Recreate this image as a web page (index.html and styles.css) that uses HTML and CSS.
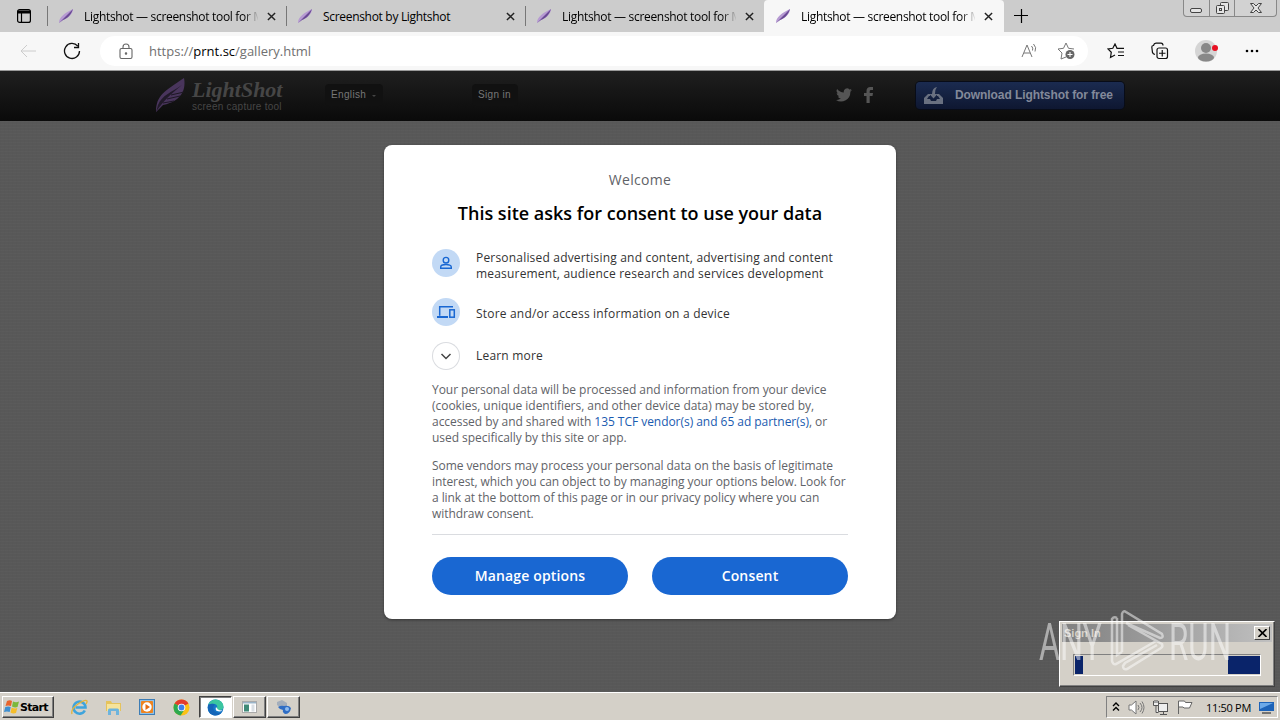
FILE: index.html
```html
<!DOCTYPE html>
<html lang="en">
<head>
    <meta charset="UTF-8">
    <title>Lightshot — screenshot tool for Mac &amp; Win</title>
    <link rel="stylesheet" href="styles.css">
</head>
<body>
    <!-- Shared shapes -->
    <svg class="defs" width="0" height="0">
        <symbol id="feather" viewBox="0 0 16 16">
            <path d="M1 15C1 9 7 5 15 1c0 4-4 9-10 11z" fill="#b69ad2"/>
            <path d="M1 15C5 11 9 7 15 1c-2 6-5 9-10 11z" fill="#6a4a94"/>
        </symbol>
        <symbol id="close" viewBox="0 0 10 10">
            <path d="M1 1l8 8M9 1l-8 8" stroke="#222" stroke-width="1.6"/>
        </symbol>
    </svg>

    <!-- Tabs -->
    <div class="tabs">
        <div class="tab-menu">
            <svg width="16" height="16" viewBox="0 0 16 16" fill="none" stroke="#000" stroke-width="1.2"><rect x="1.6" y="1.6" width="12.8" height="12.8" rx="2"/><path d="M2 3.4h12M2 4.4h12" stroke-width="2"/><path d="M5.5 5v9"/></svg>
        </div>
        <div class="tab">
            <svg class="favicon"><use href="#feather"/></svg>
            <span class="tab-title fade">Lightshot — screenshot tool for Mac</span>
            <svg class="tab-close"><use href="#close"/></svg>
        </div>
        <div class="tab">
            <svg class="favicon"><use href="#feather"/></svg>
            <span class="tab-title">Screenshot by Lightshot</span>
            <svg class="tab-close"><use href="#close"/></svg>
        </div>
        <div class="tab">
            <svg class="favicon"><use href="#feather"/></svg>
            <span class="tab-title fade">Lightshot — screenshot tool for Mac</span>
            <svg class="tab-close"><use href="#close"/></svg>
        </div>
        <div class="tab active">
            <svg class="favicon"><use href="#feather"/></svg>
            <span class="tab-title fade">Lightshot — screenshot tool for Mac</span>
            <svg class="tab-close"><use href="#close"/></svg>
        </div>
        <svg class="new-tab" width="16" height="16" viewBox="0 0 16 16"><path d="M8.500 1v14M1 7.500h14" stroke="#000" stroke-width="1.2"/></svg>
        <div class="window-buttons">
            <svg width="25" height="16" fill="#e4e4e4" stroke="#444"><rect x="6.500" y="8.500" width="11" height="4" rx="1.5"/></svg>
            <svg width="25" height="16" fill="#e4e4e4" stroke="#444"><rect x="10.5" y="2.5" width="8" height="8" rx="1"/><rect x="6.5" y="5.5" width="8" height="8" rx="1"/><rect x="9.500" y="8.500" width="2" height="2"/></svg>
            <svg width="42" height="16" fill="#e4e4e4" stroke="#444"><path d="M15.500 3.500h3l2.500 2.500 2.500-2.500h3L23 8l3.500 4.500h-3L21 10l-2.500 2.500h-3L19 8z"/></svg>
        </div>
    </div>

    <!-- Address bar -->
    <div class="toolbar">
        <svg class="back" width="18" height="16" viewBox="0 0 18 16" fill="none" stroke="#ccc"><path d="M17 8H2M8 2L2 8l6 6"/></svg>
        <svg class="reload" width="18" height="18" viewBox="0 0 18 18" fill="none" stroke="#111" stroke-width="1.3"><path d="M14.800 4.200A7.500 7.500 0 1 0 16.500 9M15.500 1v4.500H11"/></svg>
        <div class="address">
            <svg class="lock" width="14" height="17" viewBox="0 0 14 17" fill="none" stroke="#666" stroke-width="1.1"><rect x="1" y="5.500" width="12" height="10" rx="1.500"/><path d="M4 5.500V4a3 3 0 0 1 6 0v1.500"/><circle cx="7" cy="10.500" r=".7" fill="#666"/></svg>
            <span class="url">https://<b>prnt.sc</b>/gallery.html</span>
            <svg class="read" width="18" height="16" viewBox="0 0 18 16" fill="none" stroke="#777"><path d="M1 14L6 2l5 12M3 10h6M10.500 3q2 2 1 4.500M12.500 1q3.500 3.500 1.500 7.500"/></svg>
            <svg class="fav-add" width="19" height="18" viewBox="0 0 19 18" fill="none" stroke="#777"><path d="M9 15l-5 2 1-6-4-4 5.500-.7L9 1l2.500 5.300L17 7"/><circle cx="13" cy="12.500" r="4.500" fill="#666" stroke="none"/><path d="M10.500 12.500h5M13 10v5" stroke="#fff"/></svg>
        </div>
        <svg class="favorites" width="18" height="16" viewBox="0 0 18 16" fill="none" stroke="#111" stroke-width="1.200"><path d="M8 12l-4.500 2.500.8-5.300L1 6l4.800-.7L8 1l2 4.300h7M11 9h6M11 12.500h6"/></svg>
        <svg class="collections" width="18" height="18" viewBox="0 0 18 18" fill="none" stroke="#111" stroke-width="1.200"><rect x="6" y="6" width="10.500" height="10.500" rx="2"/><path d="M11.250 8v6.500M8 11.250h6.500M4 12.500Q2 12 1.500 10.500L.8 5Q.8 3.500 2.500 3.500 3 1.200 5 1.200h5q2 0 2 2.300"/></svg>
        <svg class="profile" width="24" height="22" viewBox="0 0 24 22"><circle cx="11" cy="11" r="11" fill="#d5d5d5"/><circle cx="11" cy="8" r="5" fill="#888"/><ellipse cx="11" cy="17.500" rx="8" ry="4" fill="#888"/><circle cx="20" cy="8" r="3" fill="#e81123"/></svg>
        <svg class="more" width="14" height="4"><circle cx="2" cy="2" r="1.300"/><circle cx="7" cy="2" r="1.300"/><circle cx="12" cy="2" r="1.300"/></svg>
    </div>

    <!-- Web page -->
    <div class="page">
        <header class="site-header">
            <svg class="logo-feather" width="32" height="36" viewBox="0 0 32 36"><path d="M1 35C1 18 10 14 29 1c2 10-1 23-21 27z" fill="#49355c"/><path d="M1 35C8 24 16 17 27 8 17 15 7 18 3 28z" fill="#211a29"/><path d="M16 18l13-3M12 22l13-3M8 26l11-2" stroke="#1d1724" fill="none"/></svg>
            <div class="logo-text">
                <span class="logo-name">LightShot</span>
                <span class="logo-sub">screen capture tool</span>
            </div>
            <span class="chip language">English <i></i></span>
            <span class="chip sign-in">Sign in</span>
            <svg class="twitter" width="16" height="14" viewBox="0 0 24 20" fill="#555"><path d="M24 2.400a10 10 0 0 1-2.800.8A5 5 0 0 0 23.300.5a10 10 0 0 1-3.100 1.200 4.900 4.900 0 0 0-8.400 4.500A14 14 0 0 1 1.700 1a4.900 4.900 0 0 0 1.500 6.600 5 5 0 0 1-2.200-.6 4.900 4.900 0 0 0 3.900 4.900 5 5 0 0 1-2.200.1 4.900 4.900 0 0 0 4.600 3.400A10 10 0 0 1 0 17.500 14 14 0 0 0 21.500 5z"/></svg>
            <svg class="facebook" width="9" height="16" viewBox="0 0 9 16" fill="#555"><path d="M2.500 16V9H0V6h2.500V4C2.500 1.500 4 0 6.300 0H9v3H7Q5.700 3 5.700 4.200V6H9l-.5 3H5.700v7z"/></svg>
            <div class="download">
                <svg width="19" height="17" viewBox="0 0 19 17" fill="#697080"><path d="M0 11l4-4h2v2H5l-2 3h3l1 2h5l1-2h3l-2-3h-1V7h2l4 4v6H0z"/><path d="M8 7H5.500L9.500 11.500 13.500 7H11Q10.500 3 13 0 8 1 8 7z"/></svg>
                <span>Download Lightshot for free</span>
            </div>
        </header>

        <!-- Consent dialog -->
        <div class="consent">
            <p class="welcome">Welcome</p>
            <h1>This site asks for consent to use your data</h1>
            <div class="purpose first">
                <svg class="round" width="28" height="28" viewBox="0 0 28 28" fill="none" stroke="#1967d2" stroke-width="1.400"><circle cx="14" cy="11.200" r="2.800"/><path d="M8.700 19.300v-1.200c0-3.500 10.600-3.500 10.600 0v1.200z"/></svg>
                <p>Personalised advertising and content, advertising and content<br>measurement, audience research and services development</p>
            </div>
            <div class="purpose second">
                <svg class="round" width="28" height="28" viewBox="0 0 28 28" fill="none" stroke="#1967d2" stroke-width="1.500"><path d="M21 8.800H7.700v9"/><path d="M5 19h11" stroke-width="2"/><rect x="17.800" y="11.800" width="4.500" height="7.400"/></svg>
                <p>Store and/or access information on a device</p>
            </div>
            <div class="purpose third">
                <svg class="round outline" width="28" height="28" viewBox="0 0 28 28" fill="none" stroke="#444" stroke-width="1.500"><path d="M9.500 12l4.500 4.500 4.500-4.500"/></svg>
                <p>Learn more</p>
            </div>
            <p class="details">Your personal data will be processed and information from your device<br>(cookies, unique identifiers, and other device data) may be stored by,<br>accessed by and shared with <a>135 TCF vendor(s) and 65 ad partner(s)</a>, or<br>used specifically by this site or app.</p>
            <p class="details legitimate">Some vendors may process your personal data on the basis of legitimate<br>interest, which you can object to by managing your options below. Look for<br>a link at the bottom of this page or in our privacy policy where you can<br>withdraw consent.</p>
            <div class="actions">
                <button>Manage options</button>
                <button>Consent</button>
            </div>
        </div>
    </div>

    <!-- Taskbar -->
    <div class="taskbar">
        <div class="start">
            <svg width="16" height="16" viewBox="0 0 16 16"><path d="M3 2q3-1.500 5 0L7 7Q4 6 1.500 7z" fill="#e8642c"/><path d="M9 2.500q3 1.500 6 0L13.500 8Q11 9 8 7.500z" fill="#7cb83c"/><path d="M1.300 8q3-1 5.400 0l-1 5Q3 12 0 13z" fill="#3f8fd0"/><path d="M7.700 8.500q3 1.500 5.600.5L12 14q-3 1-5.500-.5z" fill="#f5bd2a"/></svg>
            <span>Start</span>
        </div>
        <svg class="launch ie" width="17" height="17" viewBox="0 0 17 17"><path d="M13.800 11.500A6 6 0 1 1 14.500 8.500H4.500" fill="none" stroke="#3fa4dc" stroke-width="2.600"/><path d="M1 15Q-.5 10 7 5t9-3q.500 1-1 3" fill="none" stroke="#e4b43c" stroke-width="1.300"/></svg>
        <svg class="launch" width="17" height="17" viewBox="0 0 17 17"><path d="M1 2h5l1 2h9v8H1z" fill="#e5c35c"/><path d="M2 5h13v7H2z" fill="#f6e39b"/><path d="M3 16v-5q0-1.500 1.500-1.500h8q1.500 0 1.500 1.500v5h-3v-4H6v4z" fill="#6db4dd"/></svg>
        <svg class="launch" width="17" height="17" viewBox="0 0 17 17"><rect x=".5" y=".5" width="15" height="15" fill="#8fc1e8" stroke="#3d7db5"/><rect x="2" y="2" width="12" height="12" rx="1" fill="#ee8420"/><circle cx="8" cy="8" r="4.700" fill="#fff"/><path d="M6.500 5l4.500 3-4.500 3z" fill="#e56c12"/></svg>
        <svg class="launch" width="17" height="17" viewBox="0 0 17 17"><circle cx="8.500" cy="8.500" r="8" fill="#fbc116"/><path d="M8.500 8.500L1.600 4.500a8 8 0 0 1 13.800 0z" fill="#e33b2e"/><path d="M8.500 8.500L1.600 4.500a8 8 0 0 0 6 12l4-6z" fill="#2da94f"/><path d="M2 4.500h13.500L8 6z" fill="#e33b2e"/><circle cx="8.500" cy="8.500" r="3.800" fill="#fff"/><circle cx="8.500" cy="8.500" r="2.900" fill="#3f7fe8"/></svg>
        <div class="task pressed">
            <svg width="17" height="17" viewBox="0 0 17 17"><circle cx="8.500" cy="8.500" r="8" fill="#1678c8"/><path d="M1 6Q4 0 9 .5q7 1 7.500 7 0 4-4.500 3.500-3 0-2-2 1-3-2-4-3-1-7 1z" fill="#3bc6a0"/><path d="M1 6q4-2 7-.5Q5 8 7 11.500q3 4 8 1.500-3 4-8 3.500Q0 15 1 6z" fill="#1565b8"/><path d="M9 8q-1 3 1 4 3 1 5.500-.500-3.500 0-4.500-1z" fill="#fff"/></svg>
        </div>
        <div class="task">
            <svg width="15" height="12" viewBox="0 0 15 12"><rect x=".5" y=".5" width="14" height="11" fill="#fff" stroke="#aaa"/><path d="M1 1h13v1.500H1z" fill="#9ab4c8"/><path d="M2 3.500h5v7H2z" fill="#3f8a78"/><path d="M9.500 3.500h3v7h-3z" fill="#d9dfe4"/></svg>
        </div>
        <div class="task">
            <svg width="17" height="16" viewBox="0 0 17 16"><path d="M2 3l5-2 5 3v4l-6 1-4-3z" fill="#a4aebb"/><path d="M3 8q3-2 6-1 5-1 7 2-1 6-6 6-3-2-2-4-3 0-5-3z" fill="#2f6dc4"/><circle cx="12" cy="10" r="2" fill="#8fbcf0"/></svg>
        </div>
        <div class="tray">
            <svg width="8" height="12" viewBox="0 0 8 12" fill="none" stroke="#000" stroke-width="1.400"><path d="M1 5l3-3 3 3M1 9.500l3-3 3 3"/></svg>
            <svg class="speaker" width="17" height="15" viewBox="0 0 17 15" fill="#fff" stroke="#777"><path d="M1 5h2.500L8 1v13l-4.500-4H1z"/><path d="M10 5q2 2.500 0 5M12 3q4 4.500 0 9M14 1.500q4 6 0 12" fill="none"/></svg>
            <svg class="network" width="16" height="15" viewBox="0 0 16 15" fill="#eee" stroke="#555"><rect x="5.500" y="3.500" width="9" height="8"/><path d="M7 14.500h7M10.500 12v2"/><path d="M.5 1v4.500h5V1M2 0v3M4 0v3M3 5.500v7h2.500" fill="#eee"/></svg>
            <svg class="flag" width="16" height="14" viewBox="0 0 16 14" fill="#fff" stroke="#666"><path d="M1.500 14V1h6l1 1.500H15L12.500 8H7L6 7H1.500"/></svg>
            <span class="clock">11:50 PM</span>
            <svg class="desktop" width="16" height="13" viewBox="0 0 16 13"><path d="M0 1h15v9H0z" fill="#1c63b8"/><path d="M1 2h13L1 8z" fill="#6ba9e8"/><path d="M3 12h9" stroke="#555" stroke-width="1.500"/></svg>
        </div>
    </div>

    <!-- Sign in window -->
    <div class="popup">
        <div class="popup-title">
            <span>Sign In</span>
            <div class="popup-close"><svg width="9" height="8" viewBox="0 0 9 8"><path d="M.5 0l8 8M8.500 0l-8 8" stroke="#000" stroke-width="1.600"/></svg></div>
        </div>
        <div class="progress"><i class="chunk small"></i><i class="chunk"></i></div>
    </div>

    <!-- Watermark -->
    <svg class="watermark" width="200" height="70" viewBox="1035 606 200 70">
        <text x="1039" y="660" textLength="63" lengthAdjust="spacingAndGlyphs">ANY</text>
        <text x="1169" y="660" textLength="62" lengthAdjust="spacingAndGlyphs">RUN</text>
        <path d="M1122 652V614q1-4 4-2l36 22q2 4-2 4l-34-15M1128 625l34 19q1 3-1 4l-34 21q-4 1-4-3l2-3 32-18M1117 618q-3-2-5 1v42q1 4 4 3l40-23M1117 618v37l5-3"/>
    </svg>
</body>
</html>
```
FILE: styles.css
```css
body {
    margin: 0;
    width: 1280px;
    height: 720px;
    overflow: hidden;
    display: flex;
    flex-direction: column;
    font-family: "Open Sans", "Noto Sans", sans-serif;
    font-size: 12px;
}

p, h1 {
    margin: 0;
}

svg {
    flex: none;
}

.defs {
    position: absolute;
}

/* Tabs */
.tabs {
    display: flex;
    height: 32px;
    background: #ccc;
    flex: none;
}

.tab-menu {
    width: 47px;
    padding: 8px 0 0 16px;
    box-sizing: border-box;
}

.tab {
    display: flex;
    align-items: center;
    width: 239px;
    padding: 0 10px 0 11px;
    box-sizing: border-box;
    background: linear-gradient(#777, #777) 0 6px / 1px 20px no-repeat;
}

.tab.active {
    width: 240px;
    background: #f7f7f7;
    border-radius: 4px 4px 0 0;
}

.favicon {
    width: 16px;
    height: 16px;
    margin-right: 10px;
}

.tab-title {
    width: 174px;
    white-space: nowrap;
    overflow: hidden;
    letter-spacing: -0.31px;
}

.tab-title.fade {
    mask-image: linear-gradient(90deg, #000 160px, transparent 175px);
}

.tab-close {
    width: 9px;
    height: 9px;
    margin-left: 9px;
}

.new-tab {
    margin: 8px 0 0 9px;
}

.window-buttons {
    display: flex;
    height: 17px;
    margin-left: auto;
    margin-right: 3px;
    border: 1px solid #888;
    border-top: 0;
    border-radius: 0 0 4px 4px;
    box-sizing: border-box;
    background: #d2d2d2;
}

.window-buttons svg + svg {
    border-left: 1px solid #888;
    box-sizing: border-box;
}

/* Address bar */
.toolbar {
    display: flex;
    align-items: center;
    height: 38px;
    background: #f7f7f7;
    flex: none;
    box-sizing: border-box;
}

.back {
    margin-left: 19px;
}

.reload {
    margin-left: 26px;
}

.address {
    display: flex;
    align-items: center;
    width: 988px;
    height: 30px;
    margin-left: 19px;
    border-radius: 15px;
    background: #fff;
}

.lock {
    margin-left: 19px;
}

.url {
    margin-left: 16px;
    font-size: 13px;
    color: #707070;
}

.url b {
    font-weight: normal;
    color: #000;
}

.read {
    margin-left: auto;
}

.fav-add {
    margin: 0 12px 0 18px;
}

.favorites {
    margin-left: 19px;
}

.collections {
    margin-left: 26px;
}

.profile {
    margin-left: 26px;
}

.more {
    margin-left: 26px;
}

/* Web page */
.page {
    height: 622px;
    background: repeating-linear-gradient(0deg, rgba(255, 255, 255, 0.015) 0 1px, transparent 1px 3px), repeating-linear-gradient(90deg, rgba(0, 0, 0, 0.015) 0 1px, transparent 1px 4px), #585858;
}

.site-header {
    display: flex;
    align-items: center;
    height: 51px;
    padding: 0 0 2px 155px;
    box-sizing: border-box;
    border-top: 1px solid #999;
    background: linear-gradient(#1f1f1f, #0a0a0a);
    color: #777;
    font-family: "Liberation Sans", Arial, sans-serif;
    font-size: 10px;
}

.logo-text {
    display: flex;
    flex-direction: column;
    width: 95px;
    margin-left: 5px;
    padding-top: 1px;
    color: #464646;
    white-space: nowrap;
}

.logo-name {
    font-family: "Liberation Serif", serif;
    font-size: 22px;
    line-height: 22px;
    font-weight: bold;
    font-style: italic;
}

.logo-sub {
    line-height: 11px;
    letter-spacing: 0.25px;
}

.chip {
    height: 22px;
    line-height: 22px;
    padding: 0 6px;
    border-radius: 4px;
    background: #111;
    letter-spacing: 0.35px;
    white-space: nowrap;
    box-sizing: border-box;
}

.language {
    width: 58px;
    margin-left: 38px;
}

.language i {
    display: inline-block;
    margin-left: 3px;
    border: 2px solid transparent;
    border-top-color: #444;
    vertical-align: -1px;
}

.sign-in {
    width: 46px;
    margin-left: 89px;
}

.twitter {
    margin-left: 318px;
}

.facebook {
    margin-left: 12px;
}

.download {
    display: flex;
    align-items: center;
    width: 208px;
    height: 27px;
    margin-left: 43px;
    border-radius: 4px;
    box-sizing: border-box;
    padding-left: 8px;
    background: linear-gradient(#1b2b50, #0e1731);
    box-shadow: 0 0 0 1px #080c18;
    color: #83899a;
    font-size: 12px;
    font-weight: bold;
    letter-spacing: -0.08px;
    white-space: nowrap;
}

.download span {
    margin-left: 12px;
}

/* Consent dialog */
.consent {
    width: 512px;
    height: 474px;
    margin: 24px auto 0;
    padding: 0 48px;
    box-sizing: border-box;
    border-radius: 8px;
    background: #fff;
    box-shadow: 0 1px 3px rgba(0, 0, 0, 0.4);
    display: flow-root;
    color: #333;
    white-space: nowrap;
}

.welcome {
    margin-top: 25px;
    line-height: 20px;
    text-align: center;
    font-size: 14px;
    font-weight: 500;
    letter-spacing: 0.3px;
    color: #5f6368;
}

.consent h1 {
    margin-top: 11px;
    line-height: 24px;
    text-align: center;
    font-size: 18px;
    font-weight: 600;
    color: #000;
}

.purpose {
    display: flex;
    align-items: center;
    gap: 16px;
    line-height: 16px;
    font-weight: 500;
    letter-spacing: 0.19px;
}

.purpose.first {
    height: 32px;
    margin-top: 25px;
}

.purpose.second {
    height: 28px;
    margin-top: 16px;
}

.purpose.third {
    height: 28px;
    margin-top: 16px;
}

.purpose.second p {
    padding-top: 4px;
}

.round {
    border-radius: 50%;
    background: #c2d9f5;
}

.purpose.first .round {
    margin-top: -6px;
}

.round.outline {
    background: #fff;
    box-shadow: inset 0 0 0 1px #dadce0;
}

.details {
    margin-top: 12px;
    line-height: 16px;
    letter-spacing: -0.04px;
    color: #5f6368;
}

.details.legitimate {
    letter-spacing: -0.07px;
}

.details a {
    color: #1a5bb0;
}

.actions {
    display: flex;
    gap: 24px;
    margin-top: 12px;
    padding-top: 22px;
    border-top: 1px solid #dadce0;
}

.actions button {
    flex: 1;
    height: 38px;
    padding: 0 0 2px;
    border: none;
    border-radius: 19px;
    background: #1967d2;
    color: #fff;
    font-family: inherit;
    font-size: 14px;
    font-weight: 600;
    letter-spacing: 0.15px;
}

/* Taskbar */
.taskbar {
    display: flex;
    align-items: center;
    height: 28px;
    padding: 1px 2px 0;
    box-sizing: border-box;
    border-top: 1px solid #fff;
    background: #d4d0c8;
}

.start, .task {
    display: flex;
    align-items: center;
    height: 22px;
    box-sizing: border-box;
    border: 1px solid #fff;
    border-right-color: #404040;
    border-bottom-color: #404040;
    box-shadow: inset -1px -1px #808080;
}

.start {
    width: 52px;
    padding-left: 1px;
    margin-right: 17px;
    font-family: "DejaVu Sans", Tahoma, sans-serif;
    font-size: 11px;
    font-weight: bold;
    letter-spacing: -0.7px;
}

.launch {
    margin-right: 17px;
}

.launch.ie {
    margin-right: 17px;
}

.launch:nth-of-type(4) {
    margin-right: 9px;
}

.task {
    justify-content: center;
    width: 33px;
    margin-right: 1px;
}

.task.pressed {
    background: #fff;
    border-color: #404040 #fff #fff #404040;
    box-shadow: inset 1px 1px #808080;
}

.tray {
    display: flex;
    align-items: center;
    width: 172px;
    height: 22px;
    margin-left: auto;
    padding-left: 5px;
    box-sizing: border-box;
    border: 1px solid #808080;
    border-right-color: #fff;
    border-bottom-color: #fff;
}

.speaker {
    margin-left: 8px;
}

.network {
    margin-left: 8px;
}

.flag {
    margin-left: 8px;
}

.clock {
    margin-left: 13px;
    width: 45px;
    font-size: 11px;
    letter-spacing: -0.3px;
    white-space: nowrap;
}

.desktop {
    margin-left: 8px;
}

/* Sign in window */
.popup {
    position: absolute;
    left: 1059px;
    top: 621px;
    width: 216px;
    height: 66px;
    padding: 2px;
    box-sizing: border-box;
    border: 1px solid #fff;
    border-right-color: #404040;
    border-bottom-color: #404040;
    box-shadow: inset -1px -1px #808080;
    background: #d4d0c8;
}

.popup-title {
    display: flex;
    align-items: center;
    justify-content: space-between;
    height: 18px;
    padding: 0 2px;
    background: linear-gradient(90deg, #808080, #c0c0c0);
    color: #d4d0c8;
    font-family: "Liberation Sans", Arial, sans-serif;
    font-weight: bold;
    font-size: 11px;
}

.popup-close {
    display: flex;
    align-items: center;
    justify-content: center;
    width: 16px;
    height: 14px;
    box-sizing: border-box;
    border: 1px solid #fff;
    border-right-color: #404040;
    border-bottom-color: #404040;
    background: #d4d0c8;
}

.progress {
    display: flex;
    justify-content: space-between;
    height: 22px;
    margin: 12px 11px 0;
    padding: 1px 0;
    box-sizing: border-box;
    border: 1px solid #808080;
    border-right-color: #fff;
    border-bottom-color: #fff;
}

.chunk {
    width: 32px;
    background: #0a246a;
}

.chunk.small {
    width: 8px;
    margin-left: 1px;
}

/* Watermark */
.watermark {
    position: absolute;
    left: 1035px;
    top: 606px;
    opacity: 0.5;
    fill: #fff;
    font-family: Roboto, sans-serif;
    font-size: 52px;
    font-weight: 400;
}

.watermark path {
    fill: none;
    stroke: #fff;
    stroke-width: 2.5px;
}
```
